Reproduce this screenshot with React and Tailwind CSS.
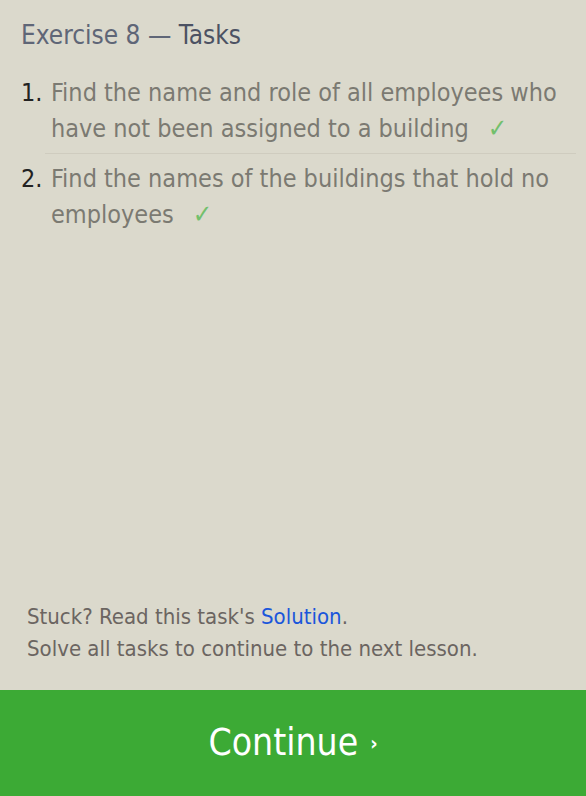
const tasks = [
  'Find the name and role of all employees who have not been assigned to a building',
  'Find the names of the buildings that hold no employees',
];

export default function App() {
  return (
    <div className="h-[796px] flex flex-col bg-[#dbd9cc] font-['DejaVu_Sans_Condensed','DejaVu_Sans',sans-serif]">
      <div className="flex-1 px-[21px] pt-[17px]">
        <h1 className="text-[26px] leading-[36px] text-[#5f6677]">
          Exercise 8 — <span className="text-[#4c5263]">Tasks</span>
        </h1>
        <ol className="mt-[22px]">
          {tasks.map((t, i) => (
            <li
              key={i}
              className={`flex ml-[24px] mr-[-11px] pb-[6px] text-[25px] leading-[36px] ${i === 0 ? 'border-b border-[#cfccbf] mb-[7px]' : ''}`}
            >
              <span className="-ml-[24px] w-[30px] shrink-0 text-[#222222]">{i + 1}.</span>
              <span className="text-[#7b7a72]">
                {t}
                <span className="ml-[19px] text-[26px] leading-none font-bold text-[#72c06c]">✓</span>
              </span>
            </li>
          ))}
        </ol>
      </div>
      <div className="px-[27px] pb-[25px] text-[22px] leading-[32px] text-[#6b6561]">
        <p>
          Stuck? Read this task's <a className="text-[#1a56db]">Solution</a>.
        </p>
        <p>Solve all tasks to continue to the next lesson.</p>
      </div>
      <button className="h-[106px] w-full bg-[#3caa35] text-white text-[37px] flex items-center justify-center">
        Continue <span className="ml-[12px] text-[20px] font-bold">›</span>
      </button>
    </div>
  );
}
